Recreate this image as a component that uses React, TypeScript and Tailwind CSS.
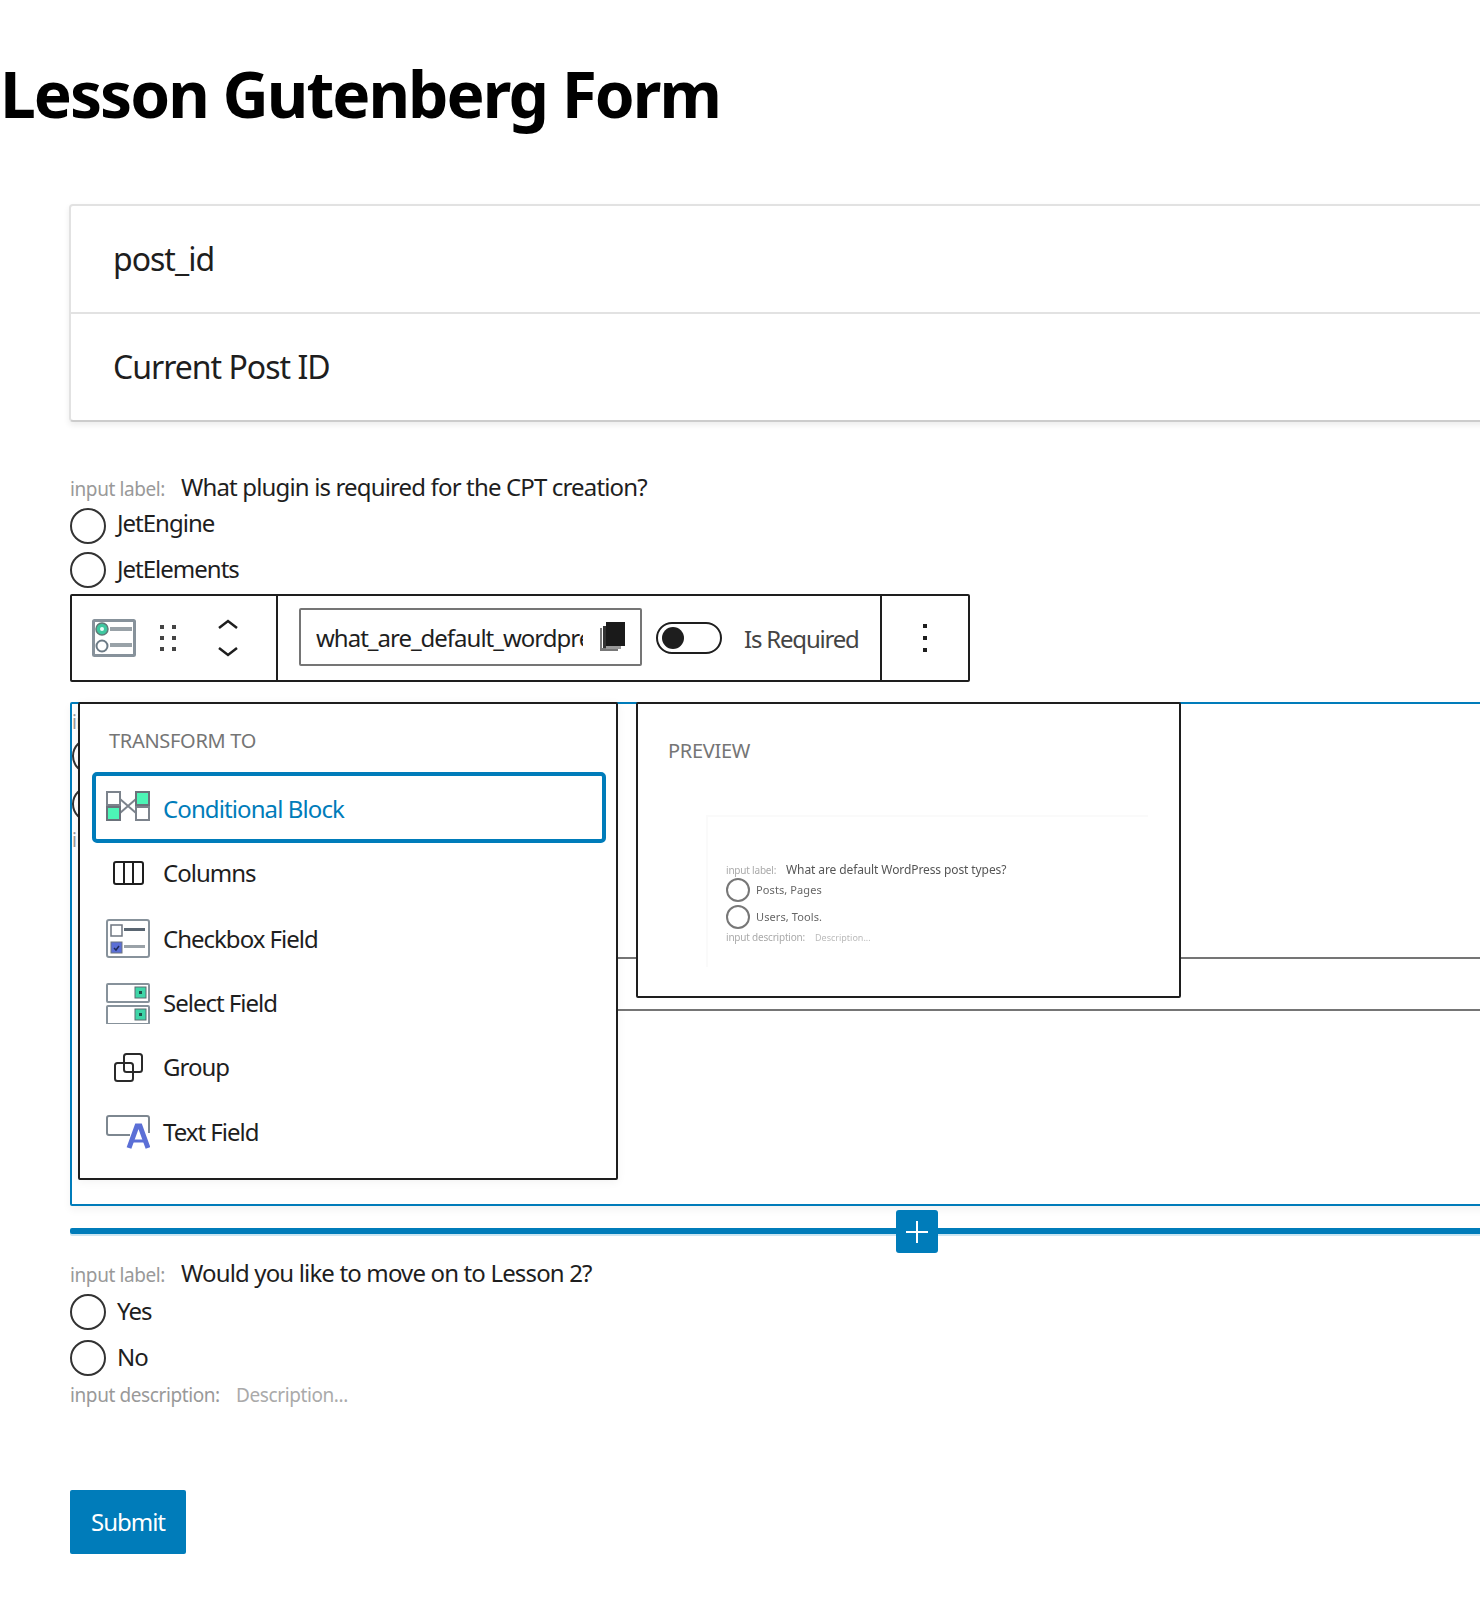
import React from 'react';

// radio circle used by every question
const Radio = ({ label, className = '', labelClass = '-mt-[2px]' }: { label: string; className?: string; labelClass?: string }) => (
  <div className={`flex items-center h-[36px] mb-[8px] ${className}`}>
    <span className="block w-[36px] h-[36px] rounded-full border-2 border-[#333] bg-white shrink-0" />
    <span className={`ml-[11px] text-[24px] leading-[30px] tracking-[-1px] text-[#1e1e1e] ${labelClass}`}>{label}</span>
  </div>
);

const QuestionLabel = ({ text }: { text: string }) => (
  <div className="flex items-baseline h-[24px]">
    <span className="text-[19px] leading-[24px] tracking-[-0.4px] text-[#999] w-[111px] shrink-0">input label:</span>
    <span className="text-[24px] leading-[24px] tracking-[-0.85px] text-[#1e1e1e]">{text}</span>
  </div>
);

const RadioFieldIcon = () => (
  <svg width="44" height="38" viewBox="0 0 44 38" fill="none">
    <rect x="1.5" y="1.5" width="41" height="35" rx="1" fill="#fff" stroke="#87929b" strokeWidth="3" />
    <circle cx="10" cy="10" r="6" fill="#3fc8a0" stroke="#5f7a78" strokeWidth="1.5" />
    <circle cx="10" cy="10" r="2" fill="#e8fff8" />
    <rect x="18" y="8" width="22" height="4" fill="#99a2a8" />
    <circle cx="10" cy="27" r="5.5" fill="#fff" stroke="#6b7a85" strokeWidth="2" />
    <rect x="18" y="24" width="22" height="4" fill="#99a2a8" />
  </svg>
);

const ConditionalIcon = () => (
  <svg width="44" height="30" viewBox="0 0 44 30" fill="none">
    <path d="M14 8l16 14M14 22L30 8" stroke="#7c838c" strokeWidth="2" />
    <rect x="1" y="1" width="13" height="13" fill="#fff" stroke="#7c838c" strokeWidth="2" />
    <rect x="1" y="16" width="13" height="13" fill="#4df5b6" stroke="#6b727b" strokeWidth="2" />
    <rect x="30" y="1" width="13" height="13" fill="#4df5b6" stroke="#6b727b" strokeWidth="2" />
    <rect x="30" y="16" width="13" height="13" fill="#fff" stroke="#7c838c" strokeWidth="2" />
  </svg>
);

const ColumnsIcon = () => (
  <svg width="31" height="24" viewBox="0 0 31 24" fill="none" stroke="#1e1e1e" strokeWidth="2">
    <rect x="1" y="1" width="29" height="22" rx="2" />
    <path d="M11 1v22M20 1v22" />
  </svg>
);

const CheckboxIcon = () => (
  <svg width="44" height="39" viewBox="0 0 44 39" fill="none">
    <rect x="1" y="1" width="42" height="37" rx="2" fill="#fff" stroke="#87929b" strokeWidth="2" />
    <rect x="5" y="6" width="11" height="11" fill="#fff" stroke="#6d7580" strokeWidth="1.5" />
    <rect x="18" y="9" width="21" height="3" fill="#5a6672" />
    <rect x="5" y="23" width="11" height="11" fill="#5b6fd6" stroke="#6d7580" strokeWidth="1" />
    <path d="M8 29l2 2 3-4" stroke="#1e2a5a" strokeWidth="1.5" />
    <rect x="18" y="26" width="21" height="3" fill="#9aa2a8" />
  </svg>
);

const SelectIcon = () => (
  <svg width="44" height="41" viewBox="0 0 44 41" fill="none">
    {[0, 22].map(y => (
      <g key={y}>
        <rect x="1" y={y + 1} width="42" height="18" rx="1" fill="#fff" stroke="#87929b" strokeWidth="2" />
        <rect x="29" y={y + 4} width="11" height="11" fill="#3fd6a8" stroke="#5d6b70" />
        <rect x="33" y={y + 8} width="3" height="3" fill="#1e4f48" />
      </g>
    ))}
  </svg>
);

const GroupIcon = () => (
  <svg width="31" height="30" viewBox="0 0 31 30" fill="none" stroke="#2a2a2a" strokeWidth="2">
    <rect x="11" y="2" width="18" height="18" rx="2.5" />
    <rect x="2" y="11" width="18" height="18" rx="2.5" />
  </svg>
);

const TextFieldIcon = () => (
  <svg width="44" height="34" viewBox="0 0 44 34" fill="none">
    <path d="M24 20H3a2 2 0 0 1-2-2V3a2 2 0 0 1 2-2h38a2 2 0 0 1 2 2v15" stroke="#7d8790" strokeWidth="2" />
    <path d="M23 33L31 11h3l8 22" stroke="#5b6fd6" strokeWidth="5" />
    <path d="M26 26h13" stroke="#5b6fd6" strokeWidth="3" />
  </svg>
);

const transforms = [
  { name: 'Columns', icon: <ColumnsIcon />, cls: 'h-[63px] pb-[4px]' },
  { name: 'Checkbox Field', icon: <CheckboxIcon />, cls: 'h-[65px]' },
  { name: 'Select Field', icon: <SelectIcon />, cls: 'h-[64px]' },
  { name: 'Group', icon: <GroupIcon />, cls: 'h-[64px]' },
  { name: 'Text Field', icon: <TextFieldIcon />, cls: 'h-[65px]' },
];

export default function App() {
  return (
    <div
      className="w-[1480px] h-[1604px] overflow-hidden bg-white text-[#1e1e1e]"
      style={{ fontFamily: '"Noto Sans", sans-serif' }}
    >
      <h1 className="pt-[54px] h-[204px] text-[64px] leading-[80px] font-bold tracking-[-2px] text-black">
        Lesson Gutenberg Form
      </h1>

      <div className="pl-[70px]">
        <div className="-ml-[1px] w-[1440px] border-2 border-[#e2e2e2] border-b-[#ccc] rounded-[4px] shadow-[0_3px_6px_rgba(0,0,0,0.08)]">
          <div className="h-[106px] pl-[42px] flex items-center text-[32px] tracking-[-1px]">post_id</div>
          <div className="h-[108px] pl-[42px] flex items-center border-t-2 border-[#e2e2e2] text-[32px] tracking-[-1px]">Current Post ID</div>
        </div>

        <div className="mt-[53px] w-[1440px]">
          <QuestionLabel text="What plugin is required for the CPT creation?" />
          <div className="mt-[9px]">
            <Radio label="JetEngine" labelClass="-mt-[6px]" />
            <Radio label="JetElements" />
          </div>
        </div>

        {/* block toolbar */}
        <div className="-mt-[2px] w-[900px] h-[88px] border-2 border-[#1e1e1e] rounded-[2px] flex items-center bg-white">
          <div className="w-[206px] h-full border-r-2 border-[#1e1e1e] flex items-center pl-[20px] shrink-0">
            <RadioFieldIcon />
            <svg className="ml-[24px]" width="16" height="26" viewBox="0 0 16 26" fill="#444">
              {[2, 13, 24].map(y => (
                <g key={y}>
                  <rect x="0" y={y - 2} width="4" height="4" />
                  <rect x="12" y={y - 2} width="4" height="4" />
                </g>
              ))}
            </svg>
            <svg className="ml-[42px] -translate-x-[1px]" width="22" height="38" viewBox="0 0 22 38" fill="none" stroke="#1e1e1e" strokeWidth="2.5">
              <path d="M2 9l9-7 9 7M2 29l9 7 9-7" />
            </svg>
          </div>
          <div className="flex-1 flex items-center pl-[21px]">
            <div className="w-[343px] h-[58px] mb-[3px] border-2 border-[#757575] rounded-[2px] flex items-center pl-[15px]">
              <span className="w-[267px] pt-[3px] overflow-hidden whitespace-nowrap text-[24px] tracking-[-1px]">what_are_default_wordpress_post_types</span>
              <svg className="ml-[16px]" width="26" height="30" viewBox="0 0 26 30">
                <path d="M1 6h2v20h16v3H1z" fill="#777" />
                <rect x="7" y="0" width="19" height="24" fill="#1a1a1a" />
                <rect x="4" y="4" width="3" height="22" fill="#333" />
                <rect x="7" y="24" width="15" height="3" fill="#999" />
              </svg>
            </div>
            <div className="ml-[14px] w-[66px] h-[32px] rounded-full border-2 border-[#1e1e1e] flex items-center pl-[4px]">
              <span className="block w-[22px] h-[22px] rounded-full bg-[#1e1e1e]" />
            </div>
            <span className="ml-[22px] pt-[2px] text-[24px] tracking-[-1.2px] text-[#444]">Is Required</span>
          </div>
          <div className="w-[88px] h-full border-l-2 border-[#1e1e1e] flex items-center justify-center shrink-0">
            <svg width="4" height="28" viewBox="0 0 4 28" fill="#1e1e1e">
              <rect width="4" height="4" y="0" />
              <rect width="4" height="4" y="12" />
              <rect width="4" height="4" y="24" />
            </svg>
          </div>
        </div>

        {/* selected block with the two popovers on top of it */}
        <div className="relative mt-[20px] w-[1440px] h-[504px] border-2 border-[#007cba] rounded-[2px] shadow-[0_4px_8px_rgba(0,0,0,0.05)] pt-[4px]">
          <QuestionLabel text="What are default WordPress post types?" />
          <div className="mt-[6px]">
            <Radio label="Posts, Pages" />
            <Radio label="Users, Tools." className="mt-[12px]" />
          </div>
          <div className="-mt-[2px] h-[24px] text-[19px] leading-[24px] text-[#999]">input description:</div>
          <div className="mt-[105px] ml-[100px] h-[54px] border-y-2 border-[#757575]" />

          <div className="absolute left-[6px] -top-[2px] w-[540px] h-[478px] bg-white border-2 border-[#1e1e1e] rounded-[2px] pt-[24px] pl-[12px] shadow-[0_2px_10px_rgba(0,0,0,0.05)]">
            <div className="pl-[17px] h-[26px] text-[20px] leading-[26px] tracking-[-0.3px] text-[#757575]">TRANSFORM TO</div>
            <div className="mt-[18px] w-[514px] h-[71px] border-[4px] border-[#007cba] rounded-[5px] flex items-center pl-[10px]">
              <div className="w-[44px] -mt-[4px] flex justify-center"><ConditionalIcon /></div>
              <span className="ml-[13px] pt-[2px] text-[24px] tracking-[-0.9px] text-[#007cba]">Conditional Block</span>
            </div>
            {transforms.map(t => (
              <div key={t.name} className={`${t.cls} flex items-center pl-[14px]`}>
                <div className="w-[44px] flex justify-center">{t.icon}</div>
                <span className="ml-[13px] text-[24px] tracking-[-1px]">{t.name}</span>
              </div>
            ))}
          </div>

          <div className="absolute left-[564px] -top-[2px] w-[545px] h-[296px] bg-white border-2 border-[#1e1e1e] rounded-[2px] pt-[34px] pl-[30px]">
            <div className="h-[26px] text-[20px] leading-[26px] tracking-[-0.3px] text-[#757575]">PREVIEW</div>
            <div className="mt-[51px] ml-[38px] w-[442px] h-[152px] border-l-2 border-t-2 border-[#fafafa] pl-[18px] pt-[46px] blur-[0.4px]">
              <div className="flex items-baseline h-[14px]">
                <span className="w-[60px] text-[10px] leading-[14px] tracking-[-0.2px] text-[#aaa]">input label:</span>
                <span className="text-[12px] leading-[14px] tracking-[-0.1px] text-[#555]">What are default WordPress post types?</span>
              </div>
              <div className="flex items-center h-[24px] mt-[1px]">
                <span className="block w-[24px] h-[24px] rounded-full border-2 border-[#777]" />
                <span className="ml-[6px] text-[11px] tracking-[0.1px] text-[#666]">Posts, Pages</span>
              </div>
              <div className="flex items-center h-[24px] mt-[3px]">
                <span className="block w-[24px] h-[24px] rounded-full border-2 border-[#777]" />
                <span className="ml-[6px] text-[11px] tracking-[0.1px] text-[#666]">Users, Tools.</span>
              </div>
              <div className="flex items-baseline h-[14px] mt-[1px]">
                <span className="w-[89px] text-[10px] leading-[14px] tracking-[-0.2px] text-[#aaa]">input description:</span>
                <span className="text-[9px] leading-[14px] text-[#bbb]">Description...</span>
              </div>
            </div>
          </div>
        </div>

        {/* inserter line */}
        <div className="relative mt-[22px] w-[1440px] h-[6px] bg-[#007cba] rounded-l-[2px] shadow-[0_2px_0_rgba(0,124,186,0.2)]">
          <div className="absolute left-[826px] -top-[18px] w-[42px] h-[43px] rounded-[3px] bg-[#007cba] flex items-center justify-center">
            <svg width="22" height="22" viewBox="0 0 22 22" fill="none" stroke="#fff" strokeWidth="2">
              <path d="M11 0v22M0 11h22" />
            </svg>
          </div>
        </div>

        <div className="mt-[27px] w-[1440px]">
          <QuestionLabel text="Would you like to move on to Lesson 2?" />
          <div className="mt-[9px]">
            <Radio label="Yes" />
            <Radio label="No" className="mt-[10px]" />
          </div>
          <div className="flex items-baseline h-[24px] -mt-[1px]">
            <span className="text-[19px] leading-[24px] tracking-[-0.4px] text-[#999] w-[166px] shrink-0">input description:</span>
            <span className="text-[19px] leading-[24px] tracking-[-0.4px] text-[#aaa]">Description...</span>
          </div>
        </div>

        <button className="mt-[83px] block w-[116px] h-[64px] rounded-[2px] bg-[#007cba] text-white text-[24px] tracking-[-1px]">
          Submit
        </button>
      </div>
    </div>
  );
}
